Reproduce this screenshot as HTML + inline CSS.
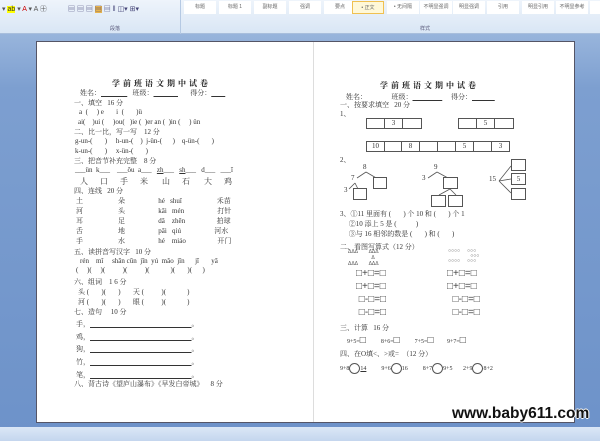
<!DOCTYPE html>
<html><head><meta charset="utf-8"><style>
*{margin:0;padding:0;box-sizing:border-box}
body{width:600px;height:441px;overflow:hidden;position:relative;background:linear-gradient(#a9c2e3,#7d9fd0 20%,#6d92c9);font-family:"Liberation Serif","Noto Serif CJK SC",serif;font-size:7px;color:#333}
.a{position:absolute;white-space:pre}
#rib{position:absolute;left:0;top:0;width:600px;height:34px;background:linear-gradient(#eef4fb,#d9e6f5);border-bottom:1px solid #a8bedc}
.st{position:absolute;top:1px;height:13px;width:32px;background:#fff;font-size:5px;color:#666;text-align:center;line-height:13px;font-family:"Liberation Sans","Noto Sans CJK SC",sans-serif}
#page{position:absolute;left:36px;top:41px;width:539px;height:382px;background:#fff;border:1px solid #556}
#sb{position:absolute;left:0;top:427px;width:600px;height:14px;background:linear-gradient(#dbe7f6,#c4d6ee)}
.b{position:absolute;border:1px solid #555;background:#fff}
.s{font-family:"Liberation Sans","Noto Sans CJK SC",sans-serif}
.h{font-weight:bold;font-size:8px;letter-spacing:3px;color:#222}
</style></head><body>
<div id="rib">
<div class="a s" style="left:2px;top:4px;font-size:7px;color:#555">▾ <span style="background:#ff0;color:#333">ab</span> ▾ <span style="color:#c00">A</span> ▾ A ㊉</div>
<div class="a s" style="left:68px;top:4px;font-size:7px;color:#447">▤ ▤ ▤ <span style="background:#e9b44c">▤</span> ▤ ‖ ◫▾ ⊞▾</div>
<div class="a s" style="left:110px;top:25px;font-size:5px;color:#557">段落</div>
<div class="a s" style="left:420px;top:25px;font-size:5px;color:#557">样式</div>
<div style="position:absolute;left:180px;top:0;width:1px;height:34px;background:#b5c9e3"></div>
<div class="st" style="left:184px">标题</div><div class="st" style="left:219px">标题 1</div><div class="st" style="left:254px">副标题</div><div class="st" style="left:289px">强调</div><div class="st" style="left:324px">要点</div><div class="st" style="left:352px;border:1px solid #f0c050;background:#fff8d8">• 正文</div><div class="st" style="left:387px">• 无间隔</div><div class="st" style="left:420px">不明显强调</div><div class="st" style="left:453px">明显强调</div><div class="st" style="left:487px">引用</div><div class="st" style="left:522px">明显引用</div><div class="st" style="left:556px">不明显参考</div><div class="st" style="left:590px">明</div>
</div>
<div id="page"></div>
<div style="position:absolute;left:313px;top:42px;width:1px;height:380px;background:#ddd"></div>
<div id="sb"></div>

<div class="a h" style="left:112px;top:78px">学前班语文期中试卷</div>
<div class="a" style="left:80px;top:88px">姓名：<u>               </u>   班级：<u>              </u>       得分：<u>        </u></div>
<div class="a" style="left:74px;top:98px">一、填空   16 分</div>
<div class="a" style="left:79px;top:108px">a  (     ) e       i  (       )ü</div>
<div class="a" style="left:78px;top:118px">ai(    )ui (     )ou(   )ie (  )er an (  )in (     ) ün</div>
<div class="a" style="left:74px;top:127px">二、比一比，写一写    12 分</div>
<div class="a" style="left:75px;top:137px">g-un-(       )     h-un-(    )  j-ün-(      )    q-ün-(       )</div>
<div class="a" style="left:75px;top:147px">k-un-(       )     x-ün-(       )</div>
<div class="a" style="left:74px;top:156px">三、把音节补充完整    8 分</div>
<div class="a" style="left:75px;top:166px">___ün  k___    ___ǒu  a___   <u>zh</u>___   <u>sh</u>___   d___   ___ī</div>
<div class="a" style="left:80px;top:176px;font-size:8px">人      口      手      米       山      石       大      鸡</div>
<div class="a" style="left:74px;top:186px">四、连线   20 分</div>
<div class="a" style="left:76px;top:196px">土                    朵                   hé   shuǐ                    禾苗
河                    头                   kāi   mén                   打针
耳                    足                   dǎ    zhēn                  拍球
舌                    地                   pāi   qiú                   河水
手                    水                   hé    miáo                  开门</div>
<div class="a" style="left:74px;top:247px">五、读拼音写汉字   10 分</div>
<div class="a" style="left:80px;top:257px">rén    mǐ     shān cūn  jīn  yú  mǎo  jīn      jī       yā</div>
<div class="a" style="left:76px;top:266px">(     )(     )(          )(          )(            )(       )(      )</div>
<div class="a" style="left:74px;top:277px">六、组词    1 6 分</div>
<div class="a" style="left:78px;top:287px">头 (       )(       )       天 (          )(            )
河 (       )(       )       眼 (          )(            )</div>
<div class="a" style="left:74px;top:307px">七、造句     10 分</div>
<div class="a" style="left:76px;top:318px;line-height:12.7px">手，<u>                                                          </u>。
鸡，<u>                                                          </u>。
狗，<u>                                                          </u>。
竹，<u>                                                          </u>。
笔，<u>                                                          </u>。</div>
<div class="a" style="left:74px;top:379px">八、背古诗《望庐山瀑布》《早发白帝城》    8 分</div>

<div class="a h" style="left:380px;top:80px">学前班语文期中试卷</div>
<div class="a" style="left:346px;top:92px">姓名：              班级：<u>                 </u>     得分：<u>             </u></div>
<div class="a" style="left:340px;top:100px">一、按要求填空   20 分</div>
<div class="a" style="left:340px;top:109px">1、</div>
<div class="b" style="left:366px;top:118px;width:56px;height:11px"></div>
<div class="b" style="left:384px;top:118px;width:19px;height:11px;text-align:center;line-height:9px">3</div>
<div class="b" style="left:458px;top:118px;width:56px;height:11px"></div>
<div class="b" style="left:476px;top:118px;width:19px;height:11px;text-align:center;line-height:9px">5</div>
<div style="position:absolute;left:366px;top:141px;display:flex">
<div class="b" style="position:static;width:19px;height:11px;text-align:center;line-height:9px">10</div><div class="b" style="position:static;width:18px;height:11px;margin-left:-1px"></div><div class="b" style="position:static;width:19px;height:11px;margin-left:-1px;text-align:center;line-height:9px">8</div><div class="b" style="position:static;width:19px;height:11px;margin-left:-1px"></div><div class="b" style="position:static;width:19px;height:11px;margin-left:-1px"></div><div class="b" style="position:static;width:19px;height:11px;margin-left:-1px;text-align:center;line-height:9px">5</div><div class="b" style="position:static;width:19px;height:11px;margin-left:-1px"></div><div class="b" style="position:static;width:19px;height:11px;margin-left:-1px;text-align:center;line-height:9px">3</div></div>
<div class="a" style="left:340px;top:155px">2、</div>
<svg style="position:absolute;left:0;top:0" width="600" height="441" stroke="#555" fill="none" stroke-width=".8">
<path d="M366 172 L357 178 M366 172 L378 179 M355 183 L349 189 M355 183 L358 189 M437 172 L428 178 M437 172 L448 178 M450 189 L439 195 M450 189 L456 195 M499 181 L511 166 M499 181 L511 179 M499 181 L511 193"/>
</svg>
<div class="a" style="left:363px;top:163px">8</div><div class="a" style="left:351px;top:174px">7</div><div class="a" style="left:344px;top:186px">3</div>
<div class="b" style="left:373px;top:177px;width:14px;height:12px"></div><div class="b" style="left:353px;top:188px;width:14px;height:12px"></div>
<div class="a" style="left:434px;top:163px">9</div><div class="a" style="left:422px;top:174px">3</div>
<div class="b" style="left:443px;top:177px;width:15px;height:12px"></div><div class="b" style="left:431px;top:195px;width:15px;height:12px"></div><div class="b" style="left:448px;top:195px;width:15px;height:12px"></div>
<div class="a" style="left:489px;top:175px">15</div>
<div class="b" style="left:511px;top:159px;width:15px;height:12px"></div><div class="b" style="left:511px;top:173px;width:15px;height:12px;text-align:center;line-height:10px">5</div><div class="b" style="left:511px;top:188px;width:15px;height:12px"></div>
<div class="a" style="left:340px;top:209px">3、①11 里面有 (       ) 个 10 和 (       ) 个 1
     ②10 添上 5 是 (           )
     ③与 16 相邻的数是 (       ) 和 (       )</div>
<div class="a" style="left:340px;top:242px">二、看图写算式（12 分）</div>
<div class="a s" style="left:348px;top:249px;font-size:5px;line-height:6px;color:#555">ΔΔΔ        ΔΔΔ
                 Δ
ΔΔΔ        ΔΔΔ</div>
<div class="a s" style="left:448px;top:249px;font-size:5px;line-height:5px;color:#555">○○○○     ○○○
                ○○○
○○○○     ○○○</div>
<div class="a s" style="left:356px;top:267px;font-size:10px;line-height:13px;color:#444">□+□=□
□+□=□
 □-□=□
 □-□=□</div>
<div class="a s" style="left:447px;top:267px;font-size:10px;line-height:13px;color:#444">□+□=□
□+□=□
  □-□=□
  □-□=□</div>
<div class="a" style="left:340px;top:323px">三、计算   16 分</div>
<div class="a" style="left:347px;top:335px;font-size:6px">9+5=<span class="s" style="font-size:10px">□</span>          8+6=<span class="s" style="font-size:10px">□</span>          7+5=<span class="s" style="font-size:10px">□</span>         9+7=<span class="s" style="font-size:10px">□</span></div>
<div class="a" style="left:340px;top:349px">四、在O填&lt;、&gt;或=  （12 分）</div>
<div class="a" style="left:340px;top:363px;font-size:6px">9+8<span style="display:inline-block;width:11px;height:11px;border:1px solid #555;border-radius:50%;vertical-align:middle"></span><u>14</u>          9+6<span style="display:inline-block;width:11px;height:11px;border:1px solid #555;border-radius:50%;vertical-align:middle"></span>16          8+7<span style="display:inline-block;width:11px;height:11px;border:1px solid #555;border-radius:50%;vertical-align:middle"></span>9+5       2+9<span style="display:inline-block;width:11px;height:11px;border:1px solid #555;border-radius:50%;vertical-align:middle"></span>8+2</div>
<div class="a s" style="left:452px;top:405px;font-size:15.5px;font-weight:bold;color:#111;text-shadow:1px 0 #fff,-1px 0 #fff,0 1px #fff,0 -1px #fff">www.baby611.com</div>
</body></html>
